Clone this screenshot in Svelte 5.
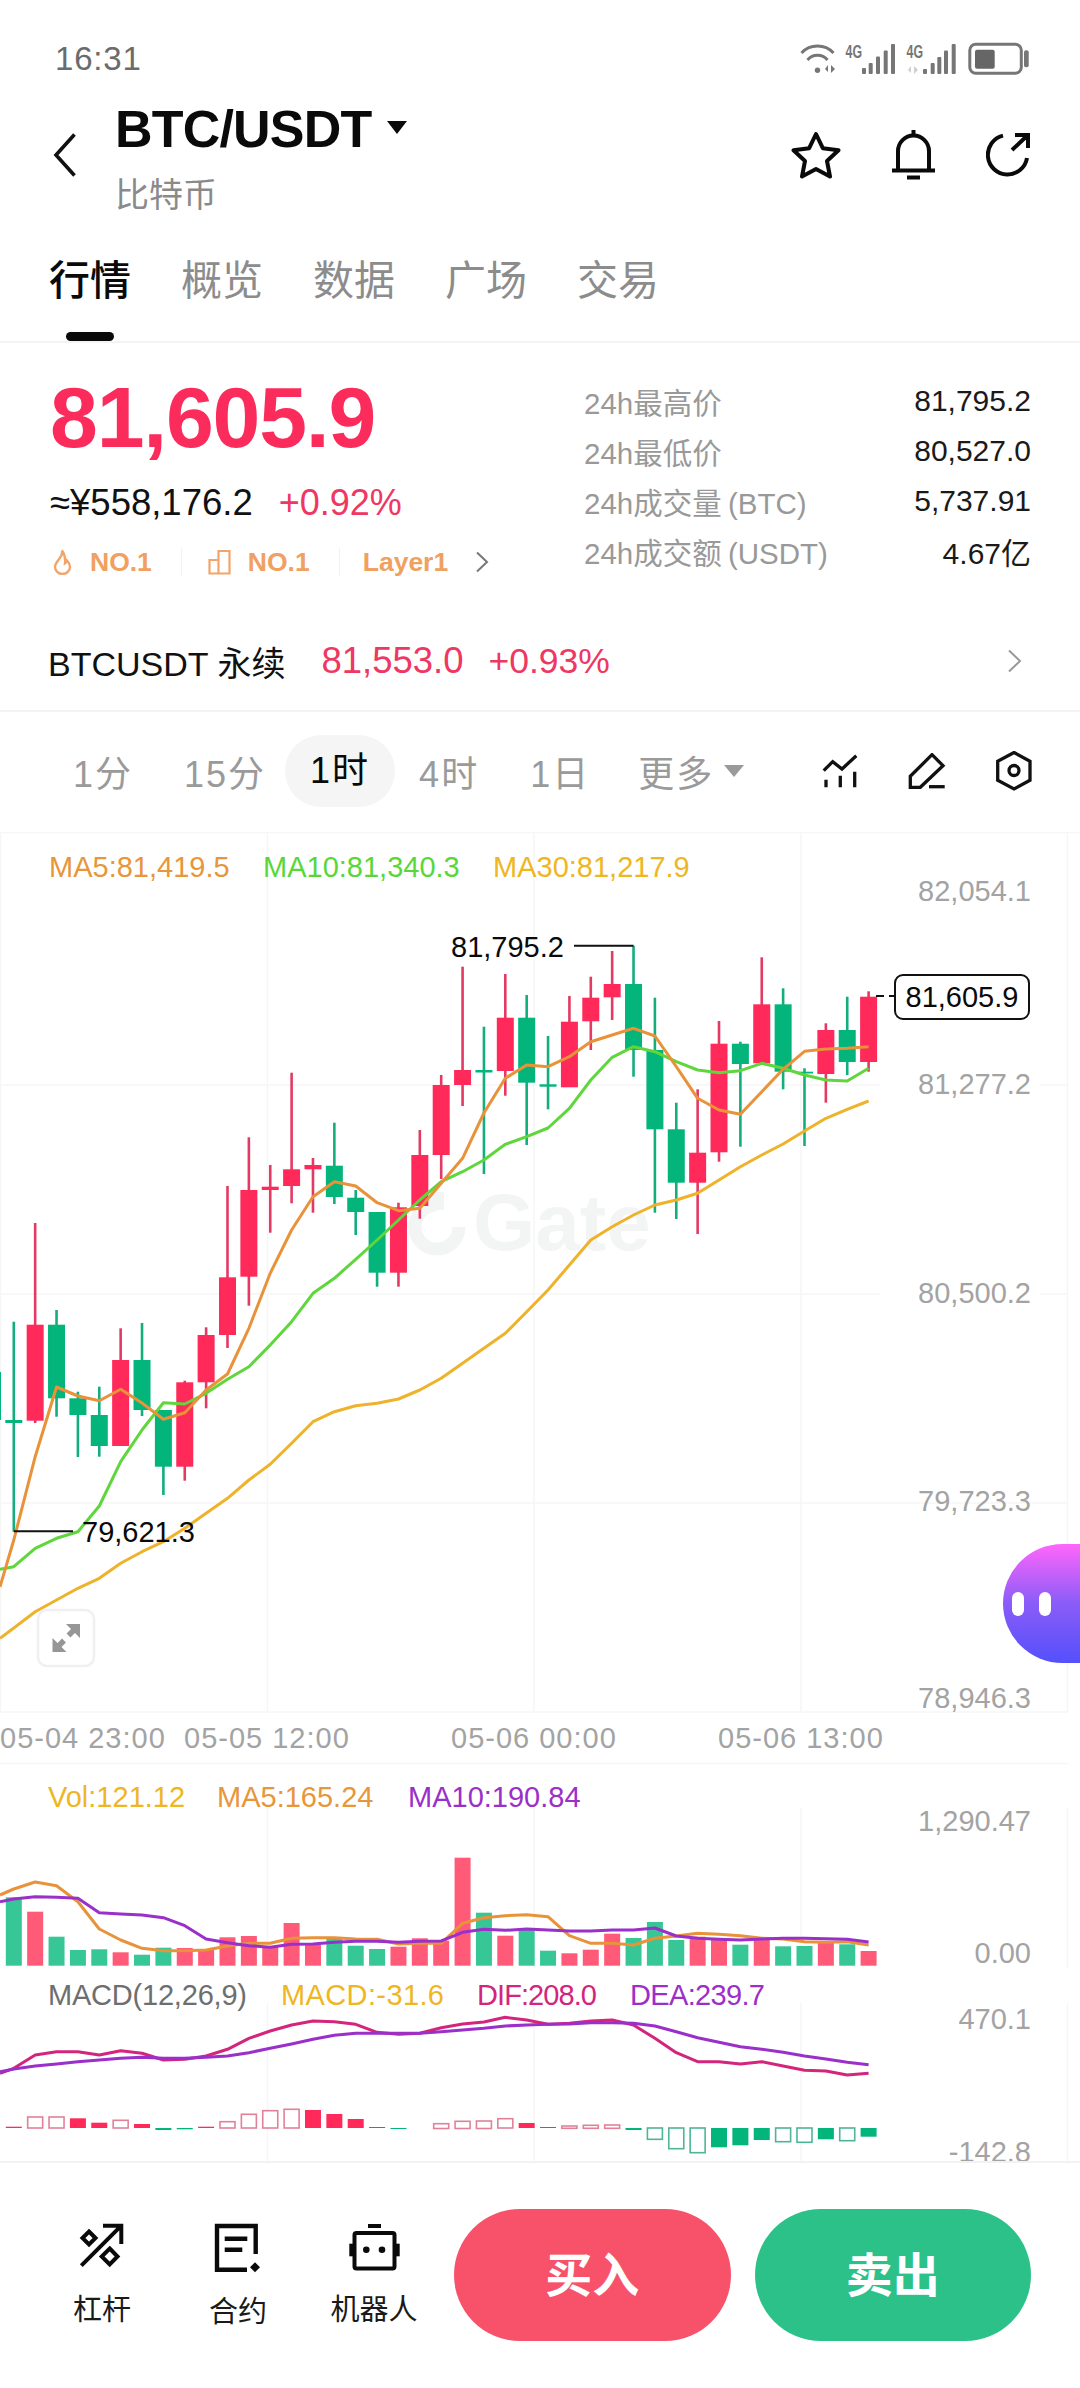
<script lang="ts">
	const tabs = ['行情', '概览', '数据', '广场', '交易'];
	const stats = [
		['24h最高价', '81,795.2'],
		['24h最低价', '80,527.0'],
		['24h成交量 (BTC)', '5,737.91'],
		['24h成交额 (USDT)', '4.67亿']
	];

	const xOf = (i: number) => 13.8 + 21.37 * i;

	// r/g, wick top, wick bottom, body top, body bottom (page y)
	const candles = [
		['g', 1321.7, 1531.7, 1420, 1423],
		['r', 1223, 1423, 1324.7, 1420.7],
		['g', 1310, 1416.7, 1324.7, 1398.3],
		['g', 1391.7, 1457, 1398.3, 1415],
		['g', 1386.7, 1456.7, 1415, 1446],
		['r', 1328.3, 1446, 1360, 1446],
		['g', 1323, 1416, 1360, 1410],
		['g', 1410, 1495, 1410, 1466.7],
		['r', 1380.7, 1480.7, 1382.3, 1466.7],
		['r', 1327.3, 1408.3, 1335, 1382.3],
		['r', 1186, 1348, 1277.3, 1335],
		['r', 1137.3, 1305.7, 1190, 1276.7],
		['r', 1165, 1232.7, 1186.7, 1190],
		['r', 1072.7, 1203.3, 1169.3, 1186],
		['r', 1158, 1212.7, 1165, 1169.3],
		['g', 1122.7, 1204, 1165.7, 1197],
		['g', 1190, 1235, 1197.7, 1212],
		['g', 1212, 1286.7, 1212, 1272.7],
		['r', 1202.7, 1286.7, 1207.3, 1272.7],
		['r', 1130, 1218.7, 1155, 1206],
		['r', 1075, 1179, 1085, 1155],
		['r', 966.7, 1106, 1070, 1085],
		['g', 1026.7, 1174, 1070, 1072.5],
		['r', 974, 1095.7, 1017.7, 1071],
		['g', 995, 1145, 1017.7, 1082.7],
		['g', 1036, 1109.3, 1084.3, 1086.7],
		['r', 996, 1087, 1021.7, 1087.3],
		['r', 976.7, 1050, 997.7, 1021.3],
		['r', 951, 1020, 984, 997.3],
		['g', 945.7, 1076.7, 984, 1050],
		['g', 997.7, 1212.7, 1050, 1129.3],
		['g', 1102.7, 1219, 1129.3, 1182.7],
		['r', 1089.3, 1234, 1152.7, 1182.7],
		['r', 1021, 1161.7, 1043.7, 1152.3],
		['g', 1041.7, 1146.7, 1043.7, 1064],
		['r', 957.3, 1063, 1004.3, 1063.3],
		['g', 988.3, 1089.3, 1004.3, 1071.7],
		['g', 1068.3, 1146, 1071.7, 1073.5],
		['r', 1023.3, 1102.7, 1030, 1074],
		['g', 996.7, 1075, 1030, 1062],
		['r', 991.3, 1071.7, 996.7, 1062]
	] as [string, number, number, number, number][];

	const volumes = [
		['g', 1897.3], ['r', 1911.7], ['g', 1936.7], ['g', 1950], ['g', 1949.3], ['r', 1952.3], ['g', 1954.7],
		['g', 1947.7], ['r', 1948], ['r', 1950], ['r', 1937.3], ['r', 1936], ['r', 1946.7], ['r', 1923],
		['r', 1945], ['g', 1938.3], ['g', 1945.7], ['g', 1949], ['r', 1946.7], ['r', 1938.3], ['r', 1940.7],
		['r', 1857.7], ['g', 1912.7], ['r', 1935.7], ['g', 1930], ['g', 1950.7], ['r', 1953.3], ['r', 1949.7],
		['r', 1933.7], ['g', 1938], ['g', 1922], ['g', 1940], ['r', 1936.7], ['r', 1938.3], ['g', 1944.7],
		['r', 1938.3], ['g', 1946.3], ['g', 1946], ['r', 1941.7], ['g', 1944.3], ['r', 1951]
	] as [string, number][];

	// r/g, filled, top, bottom (page y)
	const macd = [
		['r', 1, 2126.7, 2128], ['r', 0, 2117, 2128], ['r', 0, 2117, 2128], ['r', 1, 2118.3, 2128],
		['r', 1, 2122.7, 2128], ['r', 0, 2120.3, 2128], ['r', 1, 2124, 2128], ['g', 1, 2128, 2130],
		['g', 1, 2128, 2129.3], ['r', 1, 2126.7, 2128], ['r', 0, 2121.7, 2128], ['r', 0, 2114.3, 2128],
		['r', 0, 2110.7, 2128], ['r', 0, 2109.3, 2128], ['r', 1, 2110, 2128], ['r', 1, 2114, 2128],
		['r', 1, 2119, 2128], ['r', 1, 2127, 2128], ['g', 1, 2128, 2129], null, ['r', 0, 2123.7, 2128.5],
		['r', 0, 2121.3, 2128.5], ['r', 0, 2121, 2128.5], ['r', 0, 2118.7, 2128], ['r', 1, 2123, 2128],
		['r', 1, 2127, 2128], ['r', 0, 2126, 2128.3], ['r', 0, 2125.3, 2128.3], ['r', 0, 2125, 2128.3],
		['g', 1, 2128, 2130], ['g', 0, 2128, 2139.3], ['g', 0, 2128, 2148.7], ['g', 0, 2128, 2152.7],
		['g', 1, 2128, 2147.3], ['g', 1, 2128, 2145.3], ['g', 1, 2128, 2140], ['g', 0, 2128, 2141.7],
		['g', 0, 2128, 2142.3], ['g', 1, 2128, 2139.3], ['g', 0, 2128, 2140.7], ['g', 1, 2128, 2136.7]
	] as ([string, number, number, number] | null)[];

	// first value is the y at x=0, then one y per candle
	const ma5 = [1586.7, 1540, 1456.7, 1387, 1396, 1400.7, 1389.3, 1403, 1419.3, 1412.7, 1390, 1374, 1328.3, 1273.3, 1230, 1196.7, 1181.7, 1186, 1202.7, 1210.7, 1208.3, 1183.3, 1158.3, 1113, 1078.3, 1065, 1066.7, 1056.7, 1041.7, 1035, 1028.3, 1036, 1066.7, 1098.3, 1110, 1114.3, 1091.7, 1069.3, 1051.3, 1049, 1048.3, 1046.7];
	const ma10 = [1569.3, 1566.7, 1548.3, 1538.3, 1531.7, 1506, 1461.7, 1430, 1402.7, 1404, 1393.3, 1379.3, 1366.7, 1345, 1321.7, 1293.3, 1278.3, 1259.3, 1240, 1220, 1200, 1181.7, 1171.7, 1160, 1144.3, 1136.7, 1128, 1108.3, 1080, 1057.3, 1046.7, 1051.7, 1061.7, 1070, 1072.7, 1070.7, 1063.3, 1068.3, 1075, 1080, 1081, 1068.3];
	const ma30 = [1638.3, 1628, 1611.7, 1600, 1588.3, 1578.3, 1563.3, 1551.7, 1541.7, 1528.3, 1513.3, 1498.3, 1480, 1464.3, 1443.3, 1421.7, 1411.7, 1405.7, 1403.3, 1399, 1390, 1378.3, 1363.3, 1348.3, 1333.3, 1311.7, 1290, 1265, 1240, 1226.7, 1215, 1205, 1200, 1193.3, 1180, 1166.7, 1155, 1144, 1131, 1118.3, 1109.3, 1101];
	const volMa5 = [1895, 1889, 1882, 1885.7, 1901.7, 1929, 1940, 1948.3, 1950.7, 1950.7, 1950, 1946, 1943.3, 1943.3, 1938.3, 1937.7, 1937.7, 1939, 1939.3, 1944, 1943.3, 1943.3, 1923.3, 1917.7, 1915.7, 1914.7, 1916.7, 1935.7, 1943.3, 1943.3, 1945, 1938.3, 1936, 1933.3, 1934.3, 1935.7, 1938.3, 1939, 1941.7, 1942.3, 1941.7, 1945];
	const volMa10 = [1901.7, 1899, 1896.7, 1897.3, 1898.3, 1912.7, 1914, 1915, 1917.7, 1925.7, 1939, 1942.7, 1945.7, 1947.3, 1944.3, 1944, 1942.3, 1941.3, 1941.3, 1942.3, 1941.3, 1941, 1932.3, 1929.3, 1930.3, 1929, 1930, 1931, 1931, 1930, 1930, 1928, 1936, 1938.3, 1939.3, 1940, 1939, 1938.3, 1938.3, 1938.7, 1939.3, 1942];
	const dif = [2073.3, 2068.3, 2055, 2051.7, 2051.7, 2055, 2050.7, 2053.3, 2060, 2059.3, 2056, 2049.3, 2038.3, 2031, 2025, 2021, 2021.7, 2024.3, 2032.3, 2034.3, 2033.3, 2027.7, 2024, 2022, 2017.3, 2020, 2024.3, 2023.3, 2021, 2020, 2025, 2038.3, 2052.7, 2061.7, 2061.7, 2064, 2061.7, 2066, 2070.3, 2071, 2075, 2073.3];
	const dea = [2071.7, 2069, 2066, 2064, 2061.7, 2060, 2058.3, 2057.3, 2058.3, 2058.3, 2057.3, 2056, 2052.7, 2048.3, 2044, 2039.3, 2035.3, 2033.3, 2033.3, 2033.3, 2033.3, 2031.7, 2030, 2028.3, 2026, 2025, 2024.3, 2024, 2022.7, 2022.7, 2023.3, 2026, 2031.7, 2037.7, 2042.3, 2046.7, 2049.3, 2052.3, 2056, 2059, 2062.3, 2064.7];

	const toPoints = (ys: number[]) =>
		ys.map((y, i) => `${i === 0 ? 0 : xOf(i - 1).toFixed(1)},${y}`).join(' ');

	const gridY = [1085, 1294, 1503];
	const gridX = [267.5, 534, 801, 1067.5];
	const priceAxis = [
		['82,054.1', 900.7],
		['81,277.2', 1094],
		['80,500.2', 1303],
		['79,723.3', 1510.5],
		['78,946.3', 1708]
	] as [string, number][];
	const timeAxis = [
		['05-04 23:00', 0],
		['05-05 12:00', 184],
		['05-06 00:00', 451],
		['05-06 13:00', 718]
	] as [string, number][];
</script>

<div class="page">
	<div class="status">
		<span class="clock">16:31</span>
		<svg class="status-icons" width="229" height="44" viewBox="0 -10 229 44" fill="none" aria-hidden="true">
			<g stroke="#767676" stroke-width="3">
				<path d="M1.5 10A22 22 0 0 1 33.5 10" />
				<path d="M7.5 17A13 13 0 0 1 27.5 17" />
			</g>
			<circle cx="17.5" cy="27.3" r="2.7" fill="#767676" />
			<path d="M28 29V22l-3 4zM31 22v8l4-4z" fill="#767676" />
			<text class="net" x="45.5" y="14.5" textLength="16.5" lengthAdjust="spacingAndGlyphs">4G</text>
			<g fill="#767676">
				<rect x="62" y="25" width="4" height="6" rx="1" />
				<rect x="68.7" y="20" width="4" height="11" rx="1" />
				<rect x="76" y="13.5" width="4" height="17.5" rx="1" />
				<rect x="83.7" y="7.5" width="4" height="23.5" rx="1" />
				<rect x="91" y="1" width="4" height="30" rx="1" />
			</g>
			<text class="net" x="106.5" y="14.5" textLength="16.5" lengthAdjust="spacingAndGlyphs">4G</text>
			<path d="M111 30v-7l-3 4zM114 23v8l4-4z" fill="#cfcfcf" />
			<g fill="#767676">
				<rect x="123" y="26" width="4" height="5" rx="1" />
				<rect x="130.7" y="20" width="4" height="11" rx="1" />
				<rect x="137.3" y="14" width="4" height="17" rx="1" />
				<rect x="144" y="7.5" width="4" height="23.5" rx="1" />
				<rect x="151.7" y="1" width="4" height="30" rx="1" />
			</g>
			<rect x="169.8" y="1.2" width="51.5" height="29" rx="6" stroke="#767676" stroke-width="3" />
			<rect x="175" y="6.7" width="19.7" height="19" rx="2" fill="#666" />
			<rect x="224" y="7.3" width="4.7" height="17" rx="2" fill="#767676" />
		</svg>
	</div>

	<header class="head">
		<svg class="back" width="24" height="44" viewBox="0 0 24 44" fill="none" aria-hidden="true">
			<path d="M21.5 1.5 3 22l18.5 20.5" stroke="#111" stroke-width="3.6" />
		</svg>
		<div class="pair">
			<div class="pair-name">BTC/USDT<i class="caret"></i></div>
			<div class="pair-sub">比特币</div>
		</div>
		<div class="head-actions">
			<svg width="50" height="48" viewBox="0 0 50 48" fill="none" aria-hidden="true">
				<path d="M25 3 31.8 17.2 47.5 19.3 36 30 39 45.5 25 38 11 45.5 14 30 2.5 19.3 18.2 17.2Z" stroke="#0a0a0a" stroke-width="4" stroke-linejoin="round" />
			</svg>
			<svg width="43" height="51" viewBox="0 0 43 51" fill="none" stroke="#0a0a0a" stroke-width="4" aria-hidden="true">
				<path d="M6 40V21a15.5 15.5 0 0 1 31 0v19" />
				<path d="M0 40.5h43M21.5 0v6M15 47.5h13" />
			</svg>
			<svg width="44" height="44" viewBox="0 0 44 44" fill="none" stroke="#0a0a0a" stroke-width="4" aria-hidden="true">
				<path d="M17 2.6A19.7 19.7 0 1 0 41 25" />
				<path d="M26 17 42 2M29 2h13v13" />
			</svg>
		</div>
	</header>

	<nav class="tabs">
		{#each tabs as tab, i}
			<span class="tab" class:on={i === 0}>{tab}</span>
		{/each}
	</nav>

	<section class="ticker">
		<div class="ticker-left">
			<div class="last">81,605.9</div>
			<div class="fiat">≈¥558,176.2<span class="up">+0.92%</span></div>
			<div class="tags">
				<svg width="21" height="26" viewBox="0 0 21 26" fill="none" stroke="#f2a56a" stroke-width="2.4" aria-hidden="true">
					<path d="M10 1.5c1 5-1.5 6.5-4 10-1.500 2-3 4-3 6.500a7.500 7 0 0 0 15 0c0-3-1.500-5-3-6.500-.5 1.500-1 2.500-2 3 .5-4.500-.5-9.500-3-13Z" />
				</svg>
				<span class="tag-text">NO.1</span>
				<i class="tag-sep"></i>
				<svg width="23" height="26" viewBox="0 0 23 26" fill="none" stroke="#f2a56a" stroke-width="2.2" aria-hidden="true">
					<path d="M1.500 11h9v13.500h-9zM10.500 2h11v22.500h-11z" />
				</svg>
				<span class="tag-text">NO.1</span>
				<i class="tag-sep"></i>
				<span class="tag-text layer">Layer1</span>
				<svg class="tag-more" width="14" height="22" viewBox="0 0 14 22" fill="none" aria-hidden="true">
					<path d="M2 1.500 12 11 2 20.500" stroke="#777" stroke-width="2" />
				</svg>
			</div>
		</div>
		<dl class="stats">
			{#each stats as [label, value]}
				<div class="stat">
					<dt>{label}</dt>
					<dd>{value}</dd>
				</div>
			{/each}
		</dl>
	</section>

	<div class="perp">
		<span class="perp-name">BTCUSDT 永续</span>
		<span class="perp-price">81,553.0</span>
		<span class="perp-change">+0.93%</span>
		<svg class="perp-more" width="16" height="24" viewBox="0 0 16 24" fill="none" aria-hidden="true">
			<path d="M2 1.500 13 12 2 22.500" stroke="#999" stroke-width="2" />
		</svg>
	</div>

	<div class="intervals">
		<span>1分</span>
		<span>15分</span>
		<span class="current">1时</span>
		<span>4时</span>
		<span>1日</span>
		<span class="more">更多<i class="more-caret"></i></span>
		<div class="tools">
			<svg width="36" height="35" viewBox="0 0 36 35" fill="none" stroke="#111" stroke-width="3.300" aria-hidden="true">
				<path d="M1.700 16.700 10.700 7.700 20 15 34.300 1.700M4 25.700v7.600M18.300 21.700v11.600M32.700 17.700v15.600" />
			</svg>
			<svg width="38" height="36" viewBox="0 0 38 36" fill="none" stroke="#111" stroke-width="3.300" aria-hidden="true">
				<path d="M24 1.700 35 12.700 12.300 34.300H2.300V23.300Z" />
				<path d="M21 33.700h15.700" />
			</svg>
			<svg width="36" height="40" viewBox="0 0 36 40" fill="none" stroke="#111" stroke-width="3.300" aria-hidden="true">
				<path d="M18 1.500 34 10.300V29.300L18 38 1.700 29.300V10.300Z" />
				<circle cx="18" cy="19.500" r="5" />
			</svg>
		</div>
	</div>

	<svg class="chart" width="1080" height="1329" viewBox="0 832 1080 1329">
		<!-- grid -->
		<g class="grid">
			<path d="M0 832.500H1080M0 1712H1068M0 1763.500H1068" />
			{#each gridY as y}
				<path d="M0 {y}H1068" />
			{/each}
			{#each gridX as x}
				<path d="M{x} 832V1712M{x} 1808V1968M{x} 2003V2161" />
			{/each}
			<path d="M0.500 832V1712" />
		</g>

		<!-- watermark -->
		<g class="mark">
			<path d="M437 1205a22 22 0 1 0 22 22" fill="none" stroke="#f3f5f5" stroke-width="13" />
			<rect x="430" y="1192" width="14" height="18" fill="#f3f5f5" />
			<text x="473" y="1250">Gate</text>
		</g>

		<rect x="880" y="1070" width="160" height="30" fill="#fff" />
		<rect x="880" y="1280" width="160" height="30" fill="#fff" />

		<!-- candles -->
		{#each candles as [side, top, bottom, open, close], i}
			<rect class={side === 'r' ? 'wick-r' : 'wick-g'} x={xOf(i) - 1.3} y={top} width="2.6" height={bottom - top} />
			<rect class={side === 'r' ? 'fill-r' : 'fill-g'} x={xOf(i) - 8.5} y={open} width="17" height={close - open} />
		{/each}
		<rect class="fill-g" x="0" y="1372" width="1" height="48" />

		<polyline class="line" stroke="#5fd63c" points={toPoints(ma10)} />
		<polyline class="line" stroke="#eeb22b" points={toPoints(ma30)} />
		<polyline class="line" stroke="#e8923a" points={toPoints(ma5)} />

		<!-- markers -->
		<text class="mark-label" x="451" y="957">81,795.2</text>
		<path class="leader" d="M574 945.700H633.500" />
		<path class="leader" d="M13.800 1531.300H73" />
		<text class="mark-label" x="82" y="1542">79,621.3</text>
		<path class="leader" d="M876 996H884M889 996H895" />
		<rect class="last-box" x="895" y="975" width="134" height="44" rx="8" />
		<text class="mark-label" x="962" y="1007" text-anchor="middle">81,605.9</text>

		<!-- expand button -->
		<rect class="expand" x="38" y="1610" width="56" height="56" rx="9" />
		<path class="expand-arrows" d="M66 1624H80V1638ZM52.500 1638V1652H66.500Z" />
		<path class="expand-shaft" d="M75 1629 68.500 1635.500M57.500 1647 64 1640.500" />

		<!-- texts -->
		<text class="tx ma5" x="49" y="877">MA5:81,419.5</text>
		<text class="tx ma10" x="263" y="877">MA10:81,340.3</text>
		<text class="tx ma30" x="493" y="877">MA30:81,217.9</text>

		{#each priceAxis as [label, y]}
			<text class="tx axis" x="1031" {y} text-anchor="end">{label}</text>
		{/each}
		{#each timeAxis as [label, x]}
			<text class="tx axis time" {x} y="1748">{label}</text>
		{/each}

		<!-- volume -->
		<text class="tx ma30" x="48" y="1807">Vol:121.12</text>
		<text class="tx ma5" x="217" y="1807">MA5:165.24</text>
		<text class="tx purple" x="408" y="1807">MA10:190.84</text>
		<text class="tx axis" x="1031" y="1831" text-anchor="end">1,290.47</text>
		<text class="tx axis" x="1031" y="1963" text-anchor="end">0.00</text>
		{#each volumes as [side, top], i}
			<rect class={side === 'r' ? 'vol-r' : 'vol-g'} x={xOf(i) - 8} y={top} width="16" height={1965.7 - top} />
		{/each}
		<polyline class="line" stroke="#e8923a" points={toPoints(volMa5)} />
		<polyline class="line" stroke="#9b2fc9" points={toPoints(volMa10)} />

		<!-- macd -->
		<text class="tx grey" x="48" y="2005" textLength="199">MACD(12,26,9)</text>
		<text class="tx ma30" x="281" y="2005" textLength="163">MACD:-31.6</text>
		<text class="tx pink" x="477" y="2005" textLength="120">DIF:208.0</text>
		<text class="tx purple" x="630" y="2005" textLength="135">DEA:239.7</text>
		<text class="tx axis" x="1031" y="2029" text-anchor="end">470.1</text>
		<text class="tx axis" x="1031" y="2162" text-anchor="end">-142.8</text>
		{#each macd as bar, i}
			{#if bar}
				{#if bar[1]}
					<rect class={bar[0] === 'r' ? 'fill-r' : 'fill-g'} x={xOf(i) - 8} y={bar[2]} width="16" height={bar[3] - bar[2]} />
				{:else}
					<rect class={bar[0] === 'r' ? 'hollow-r' : 'hollow-g'} x={xOf(i) - 7.500} y={bar[2]} width="15" height={bar[3] - bar[2]} />
				{/if}
			{/if}
		{/each}
		<polyline class="line" stroke="#d3257c" points={toPoints(dif)} />
		<polyline class="line" stroke="#9b2fc9" points={toPoints(dea)} />
	</svg>

	<footer class="bar">
		<div class="shortcuts">
			<div class="shortcut">
				<svg width="48" height="48" viewBox="0 0 48 48" fill="none" stroke="#0a0a0a" stroke-width="4" aria-hidden="true">
					<path d="M11 8.500 17.500 15 11 21.500 4.500 15ZM31.700 25.500 39.500 33.500 31.700 41.500 23.700 33.500Z" />
					<path d="M3.300 42.700 43.300 2.700M25 2.700H43.300V21" />
				</svg>
				<span>杠杆</span>
			</div>
			<div class="shortcut">
				<svg width="48" height="50" viewBox="0 0 48 50" fill="none" stroke="#0a0a0a" stroke-width="4.400" aria-hidden="true">
					<path d="M41.700 31V3H3V46.700H33" />
					<path d="M10.700 15.700H33.300M10.700 26.700H28.300" />
					<path d="M41 39.300 46 44.300 41 49.300 36 44.300Z" fill="#0a0a0a" stroke="none" />
				</svg>
				<span>合约</span>
			</div>
			<div class="shortcut">
				<svg width="53" height="48" viewBox="0 0 53 48" fill="none" aria-hidden="true">
					<rect x="6.500" y="10" width="40" height="35.500" rx="2" stroke="#0a0a0a" stroke-width="4" />
					<g fill="#0a0a0a">
						<rect x="20" y="1" width="13" height="4" />
						<rect x="1.300" y="20.700" width="4" height="12.600" />
						<rect x="47.700" y="20.700" width="4" height="12.600" />
						<circle cx="18.300" cy="26.700" r="3.300" />
						<circle cx="34" cy="26.700" r="3.300" />
					</g>
				</svg>
				<span>机器人</span>
			</div>
		</div>
		<button class="trade buy">买入</button>
		<button class="trade sell">卖出</button>
	</footer>

	<div class="assistant">
		<i></i>
		<i></i>
	</div>
</div>

<style>
	:global(body) {
		margin: 0;
		background: #fff;
	}

	.page {
		position: relative;
		width: 1080px;
		height: 2388px;
		overflow: hidden;
		background: #fff;
		color: #0a0a0a;
		font-family: 'Liberation Sans', 'Noto Sans CJK SC', sans-serif;
	}

	.status {
		display: flex;
		justify-content: space-between;
		align-items: flex-start;
		height: 90px;
		padding: 40px 51px 0 55px;
		box-sizing: border-box;
	}

	.clock {
		font-size: 33px;
		line-height: 38px;
		letter-spacing: 0.8px;
		color: #6b6b6b;
	}

	.status-icons {
		margin-top: -7px;
	}

	.net {
		font-size: 18.5px;
		font-weight: 700;
		fill: #767676;
	}

	.head {
		position: relative;
		display: flex;
		height: 132px;
		padding: 9px 50px 0 53px;
		box-sizing: border-box;
	}

	.back {
		margin: 34px 38px 0 0;
	}

	.pair-name {
		display: flex;
		align-items: center;
		font-size: 52px;
		font-weight: 700;
		line-height: 60px;
		letter-spacing: -0.8px;
	}

	.caret {
		width: 0;
		height: 0;
		margin: 0 0 4px 16px;
		border-left: 10px solid transparent;
		border-right: 10px solid transparent;
		border-top: 13px solid #0a0a0a;
	}

	.pair-sub {
		margin-top: 14px;
		font-size: 34px;
		line-height: 44px;
		color: #8a8a8a;
	}

	.head-actions {
		display: flex;
		align-items: center;
		gap: 51px;
		height: 60px;
		margin: 26px 0 0 auto;
	}

	.tabs {
		display: flex;
		gap: 50px;
		height: 121px;
		padding: 36px 0 0 49px;
		box-sizing: border-box;
		border-bottom: 2px solid #f4f4f4;
	}

	.tab {
		position: relative;
		font-size: 41px;
		line-height: 46px;
		height: 46px;
		color: #8c8c8c;
	}

	.tab.on {
		color: #0a0a0a;
		font-weight: 500;
	}

	.tab.on::after {
		content: '';
		position: absolute;
		left: 17px;
		top: 74px;
		width: 48px;
		height: 9px;
		border-radius: 5px;
		background: #0a0a0a;
	}

	.ticker {
		display: flex;
		justify-content: space-between;
		height: 271px;
		padding: 24px 49px 0 50px;
		box-sizing: border-box;
	}

	.last {
		font-size: 86px;
		font-weight: 700;
		line-height: 100px;
		letter-spacing: -1.2px;
		color: #fb2c5c;
	}

	.fiat {
		display: flex;
		gap: 26px;
		margin-top: 14px;
		font-size: 36.5px;
		line-height: 44px;
		color: #111;
	}

	.up {
		font-size: 36px;
		color: #ee3762;
	}

	.tags {
		display: flex;
		align-items: center;
		margin: 17px 0 0 2px;
		height: 40px;
		font-size: 26.5px;
		color: #f0a060;
	}

	.tag-text {
		margin-left: 17px;
		font-weight: 700;
	}

	.tag-sep {
		width: 1px;
		height: 28px;
		margin: 0 26px 0 29px;
		background: #f2f2f2;
	}

	.tag-text.layer {
		margin-left: -3px;
	}

	.tag-more {
		margin-left: 27px;
	}

	.stats {
		width: 447px;
		margin: 9px 0 0;
	}

	.stat {
		display: flex;
		justify-content: space-between;
		align-items: center;
		height: 50px;
		font-size: 30px;
	}

	.stat dt {
		color: #999;
		font-size: 29.5px;
		word-spacing: -2px;
	}

	.stat dd {
		margin: 0;
		color: #1a1a1a;
	}

	.perp {
		display: flex;
		align-items: center;
		height: 98px;
		padding: 0 57px 2px 48px;
		box-sizing: border-box;
		border-bottom: 2px solid #f3f3f3;
		font-size: 36.5px;
		color: #ee3762;
	}

	.perp-name {
		margin-right: 36px;
		font-size: 34px;
		color: #111;
	}

	.perp-change {
		margin-left: 25px;
		font-size: 35.5px;
	}

	.perp-more {
		margin-left: auto;
	}

	.intervals {
		display: flex;
		align-items: center;
		gap: 51px;
		height: 118px;
		margin-bottom: 2px;
		padding: 0 48px 0 73px;
		box-sizing: border-box;
		font-size: 36px;
		letter-spacing: 2px;
		color: #9a9a9a;
	}

	.current {
		margin: 0 -27px 0 -32px;
		padding: 0 25px;
		height: 72px;
		line-height: 72px;
		border-radius: 36px;
		background: #f5f5f5;
		color: #0a0a0a;
	}

	.more {
		display: flex;
		align-items: center;
		gap: 10px;
		margin-left: -3px;
	}

	.more-caret {
		width: 0;
		height: 0;
		border-left: 10px solid transparent;
		border-right: 10px solid transparent;
		border-top: 12px solid #9a9a9a;
	}

	.tools {
		display: flex;
		align-items: center;
		gap: 50px;
		margin-left: auto;
	}

	.chart {
		display: block;
	}

	.grid path {
		fill: none;
		stroke: #f6f6f6;
		stroke-width: 1.5;
	}

	.mark text {
		font-size: 80px;
		font-weight: 700;
		fill: #f3f5f5;
	}

	.wick-r {
		fill: #e33a64;
	}

	.wick-g {
		fill: #14ad7e;
	}

	.fill-r {
		fill: #ff2a59;
	}

	.fill-g {
		fill: #03b57b;
	}

	.vol-r {
		fill: #ff5a78;
	}

	.vol-g {
		fill: #37c796;
	}

	.hollow-r {
		fill: #fff;
		stroke: #e2809a;
		stroke-width: 1.600;
	}

	.hollow-g {
		fill: #fff;
		stroke: #4eb596;
		stroke-width: 1.600;
	}

	.line {
		fill: none;
		stroke-width: 3;
		stroke-linejoin: round;
	}

	.leader {
		fill: none;
		stroke: #111;
		stroke-width: 2;
	}

	.mark-label {
		font-size: 29px;
		fill: #0a0a0a;
	}

	.last-box {
		fill: #fff;
		stroke: #111;
		stroke-width: 2;
	}

	.expand {
		fill: #fff;
		stroke: #f0f0f0;
		stroke-width: 2.500;
	}

	.expand-arrows {
		fill: #969696;
	}

	.expand-shaft {
		fill: none;
		stroke: #969696;
		stroke-width: 5.500;
	}

	.tx {
		font-size: 29px;
	}

	.ma5 {
		fill: #e8963a;
	}

	.ma10 {
		fill: #58d838;
	}

	.ma30 {
		fill: #efb623;
	}

	.purple {
		fill: #9b2fc9;
	}

	.pink {
		fill: #d3257c;
	}

	.grey {
		fill: #6e6e6e;
	}

	.axis {
		fill: #a3a3a3;
	}

	.time {
		letter-spacing: 1px;
	}

	.bar {
		display: flex;
		align-items: flex-start;
		height: 227px;
		padding: 46px 49px 0 52px;
		box-sizing: border-box;
		border-top: 2px solid #f2f2f2;
	}

	.shortcuts {
		display: flex;
		gap: 36px;
		margin-right: 30px;
	}

	.shortcut {
		display: flex;
		flex-direction: column;
		align-items: center;
		width: 100px;
		padding-top: 14px;
	}

	.shortcut span {
		margin-top: 21px;
		font-size: 29px;
		line-height: 36px;
		color: #1a1a1a;
		white-space: nowrap;
	}

	.trade {
		width: 277px;
		height: 132px;
		padding: 0 0 8px;
		border: 0;
		border-radius: 66px;
		font-family: inherit;
		font-size: 47px;
		font-weight: 700;
		color: #fff;
	}

	.buy {
		background: #f7526a;
	}

	.sell {
		margin-left: 24px;
		background: #2dc18a;
	}

	.assistant {
		position: absolute;
		left: 1003px;
		top: 1544px;
		display: flex;
		gap: 15px;
		align-items: center;
		width: 77px;
		height: 119px;
		padding-left: 9px;
		box-sizing: border-box;
		border-radius: 60px 0 0 60px;
		background: linear-gradient(#ff66fb, #8a5cf8 50%, #5450fb);
	}

	.assistant i {
		width: 12px;
		height: 24px;
		border-radius: 6px;
		background: #fff;
	}
</style>
